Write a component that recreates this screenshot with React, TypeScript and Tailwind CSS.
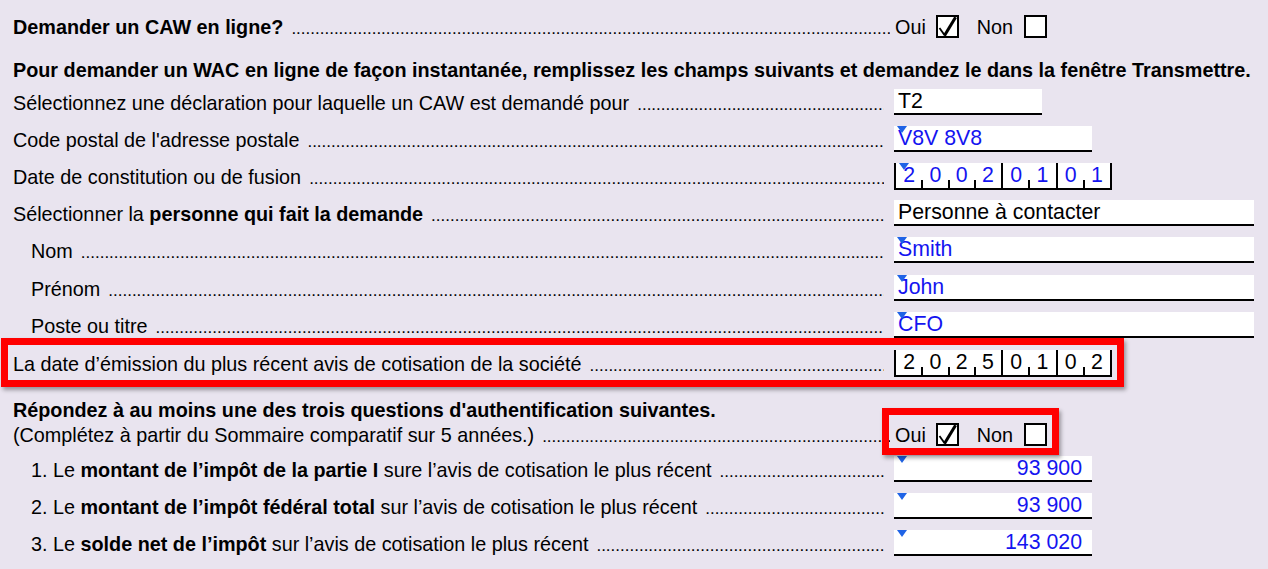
import React from "react";

const DOTS = ".".repeat(260);

function Dots() {
  return (
    <span className="min-w-0 flex-1 overflow-hidden whitespace-nowrap pl-[8px] text-[17px]">{DOTS}</span>
  );
}

function Marker() {
  return (
    <span className="absolute left-[3px] top-0 h-0 w-0 border-l-[5px] border-r-[5px] border-t-[7px] border-l-transparent border-r-transparent border-t-[#1f63e6]" />
  );
}

function TextField({
  value,
  width,
  blue,
  right,
}: {
  value: string;
  width: string;
  blue?: boolean;
  right?: boolean;
}) {
  return (
    <div
      className={
        "relative h-[26px] border-b-2 border-black bg-white text-[21.3px] leading-[25px] " +
        width +
        (right ? " pr-[10px] text-right" : " pl-[4px]") +
        (blue ? " text-[#1414f0]" : " text-black")
      }
    >
      {value}
      {blue ? <Marker /> : null}
    </div>
  );
}

function DateField({ digits, blue }: { digits: string; blue?: boolean }) {
  const full = [3, 5, 7];
  return (
    <div
      className={
        "relative flex h-[27px] w-[218px] border-b-2 border-l-2 border-black bg-white text-[21.3px] leading-[25px] " +
        (blue ? "text-[#1414f0]" : "text-black")
      }
    >
      {digits.split("").map((d, i) => (
        <div
          key={i}
          className={
            "relative flex-1 text-center " + (full.includes(i) ? "border-r-2 border-black" : "")
          }
        >
          {d}
          {full.includes(i) ? null : (
            <span className="absolute bottom-0 right-[-1px] h-[8px] w-[2px] bg-black" />
          )}
        </div>
      ))}
      {blue ? <Marker /> : null}
    </div>
  );
}

function Check({ checked }: { checked?: boolean }) {
  return (
    <div className="relative h-[23px] w-[23px] border-2 border-black bg-white">
      {checked ? (
        <svg viewBox="0 0 19 19" className="absolute inset-0 h-[19px] w-[19px]">
          <line x1="1.5" y1="11" x2="6.8" y2="18.4" stroke="black" strokeWidth="1.8" />
          <line x1="6.5" y1="18.6" x2="17.6" y2="0.2" stroke="black" strokeWidth="3" />
        </svg>
      ) : null}
    </div>
  );
}

function OuiNon() {
  return (
    <div className="ml-[5px] flex items-center">
      <span className="pt-[1px]">Oui</span>
      <span className="ml-[10px]">
        <Check checked />
      </span>
      <span className="ml-[18px] pt-[1px]">Non</span>
      <span className="ml-[11px]">
        <Check />
      </span>
    </div>
  );
}

function Label({
  children,
  indent,
  wide,
}: {
  children: React.ReactNode;
  indent?: boolean;
  wide?: boolean;
}) {
  return (
    <div
      className={
        "flex shrink-0 items-baseline overflow-hidden whitespace-nowrap pt-[3px] " +
        (wide ? "w-[890px] " : "w-[884px] ") +
        (indent ? "pl-[31px]" : "pl-[13px]")
      }
    >
      <span className="shrink-0">{children}</span>
      <Dots />
    </div>
  );
}

function Row({ children, className }: { children: React.ReactNode; className: string }) {
  return <div className={"flex h-[26px] items-center " + className}>{children}</div>;
}

export default function App() {
  return (
    <div className="relative h-[569px] w-[1268px] overflow-hidden bg-[#e9e4ef] font-['Liberation_Sans',Arial,sans-serif] text-[19.8px] leading-[26px] text-black">
      <div className="flex flex-col pt-[13px]">
        <Row className="">
          <Label wide>
            <b>Demander un CAW en ligne?</b>
          </Label>
          <OuiNon />
        </Row>
        <Row className="mt-[16px]">
          <div className="whitespace-nowrap pl-[13px] pt-[3px] font-bold">
            Pour demander un WAC en ligne de façon instantanée, remplissez les champs suivants et demandez le dans la fenêtre Transmettre.
          </div>
        </Row>
        <Row className="mt-[8px]">
          <Label>Sélectionnez une déclaration pour laquelle un CAW est demandé pour</Label>
          <div className="ml-[10px]">
            <TextField value="T2" width="w-[148px]" />
          </div>
        </Row>
        <Row className="mt-[11px]">
          <Label>Code postal de l'adresse postale</Label>
          <div className="ml-[10px]">
            <TextField value="V8V 8V8" width="w-[198px]" blue />
          </div>
        </Row>
        <Row className="mt-[11px]">
          <Label>Date de constitution ou de fusion</Label>
          <div className="ml-[10px]">
            <DateField digits="20020101" blue />
          </div>
        </Row>
        <Row className="mt-[11px]">
          <Label>
            Sélectionner la <b>personne qui fait la demande</b>
          </Label>
          <div className="ml-[10px]">
            <TextField value="Personne à contacter" width="w-[360px]" />
          </div>
        </Row>
        <Row className="mt-[11px]">
          <Label indent>Nom</Label>
          <div className="ml-[10px]">
            <TextField value="Smith" width="w-[360px]" blue />
          </div>
        </Row>
        <Row className="mt-[12px]">
          <Label indent>Prénom</Label>
          <div className="ml-[10px]">
            <TextField value="John" width="w-[360px]" blue />
          </div>
        </Row>
        <Row className="mt-[11px]">
          <Label indent>Poste ou titre</Label>
          <div className="ml-[10px]">
            <TextField value="CFO" width="w-[360px]" blue />
          </div>
        </Row>
        <Row className="mt-[12px]">
          <Label>La date d’émission du plus récent avis de cotisation de la société</Label>
          <div className="ml-[10px]">
            <DateField digits="20250102" />
          </div>
        </Row>
        <Row className="mt-[19px]">
          <div className="whitespace-nowrap pl-[13px] pt-[3px] font-bold">
            Répondez à au moins une des trois questions d'authentification suivantes.
          </div>
        </Row>
        <Row className="">
          <Label wide>(Complétez à partir du Sommaire comparatif sur 5 années.)</Label>
          <OuiNon />
        </Row>
        <Row className="mt-[9px]">
          <Label indent>
            1. Le <b>montant de l’impôt de la partie I</b> sure l’avis de cotisation le plus récent
          </Label>
          <div className="ml-[10px]">
            <TextField value="93 900" width="w-[198px]" blue right />
          </div>
        </Row>
        <Row className="mt-[11px]">
          <Label indent>
            2. Le <b>montant de l’impôt fédéral total</b> sur l’avis de cotisation le plus récent
          </Label>
          <div className="ml-[10px]">
            <TextField value="93 900" width="w-[198px]" blue right />
          </div>
        </Row>
        <Row className="mt-[11px]">
          <Label indent>
            3. Le <b>solde net de l’impôt</b> sur l’avis de cotisation le plus récent
          </Label>
          <div className="ml-[10px]">
            <TextField value="143 020" width="w-[198px]" blue right />
          </div>
        </Row>
      </div>

      <div className="pointer-events-none absolute left-[1px] top-[338px] h-[49px] w-[1123px] border-[7px] border-[#ff0000] shadow-[2px_3px_4px_rgba(0,0,0,0.35)]" />
      <div className="pointer-events-none absolute left-[882px] top-[408px] h-[47px] w-[177px] border-[7px] border-[#ff0000] shadow-[2px_3px_4px_rgba(0,0,0,0.35)]" />
    </div>
  );
}
